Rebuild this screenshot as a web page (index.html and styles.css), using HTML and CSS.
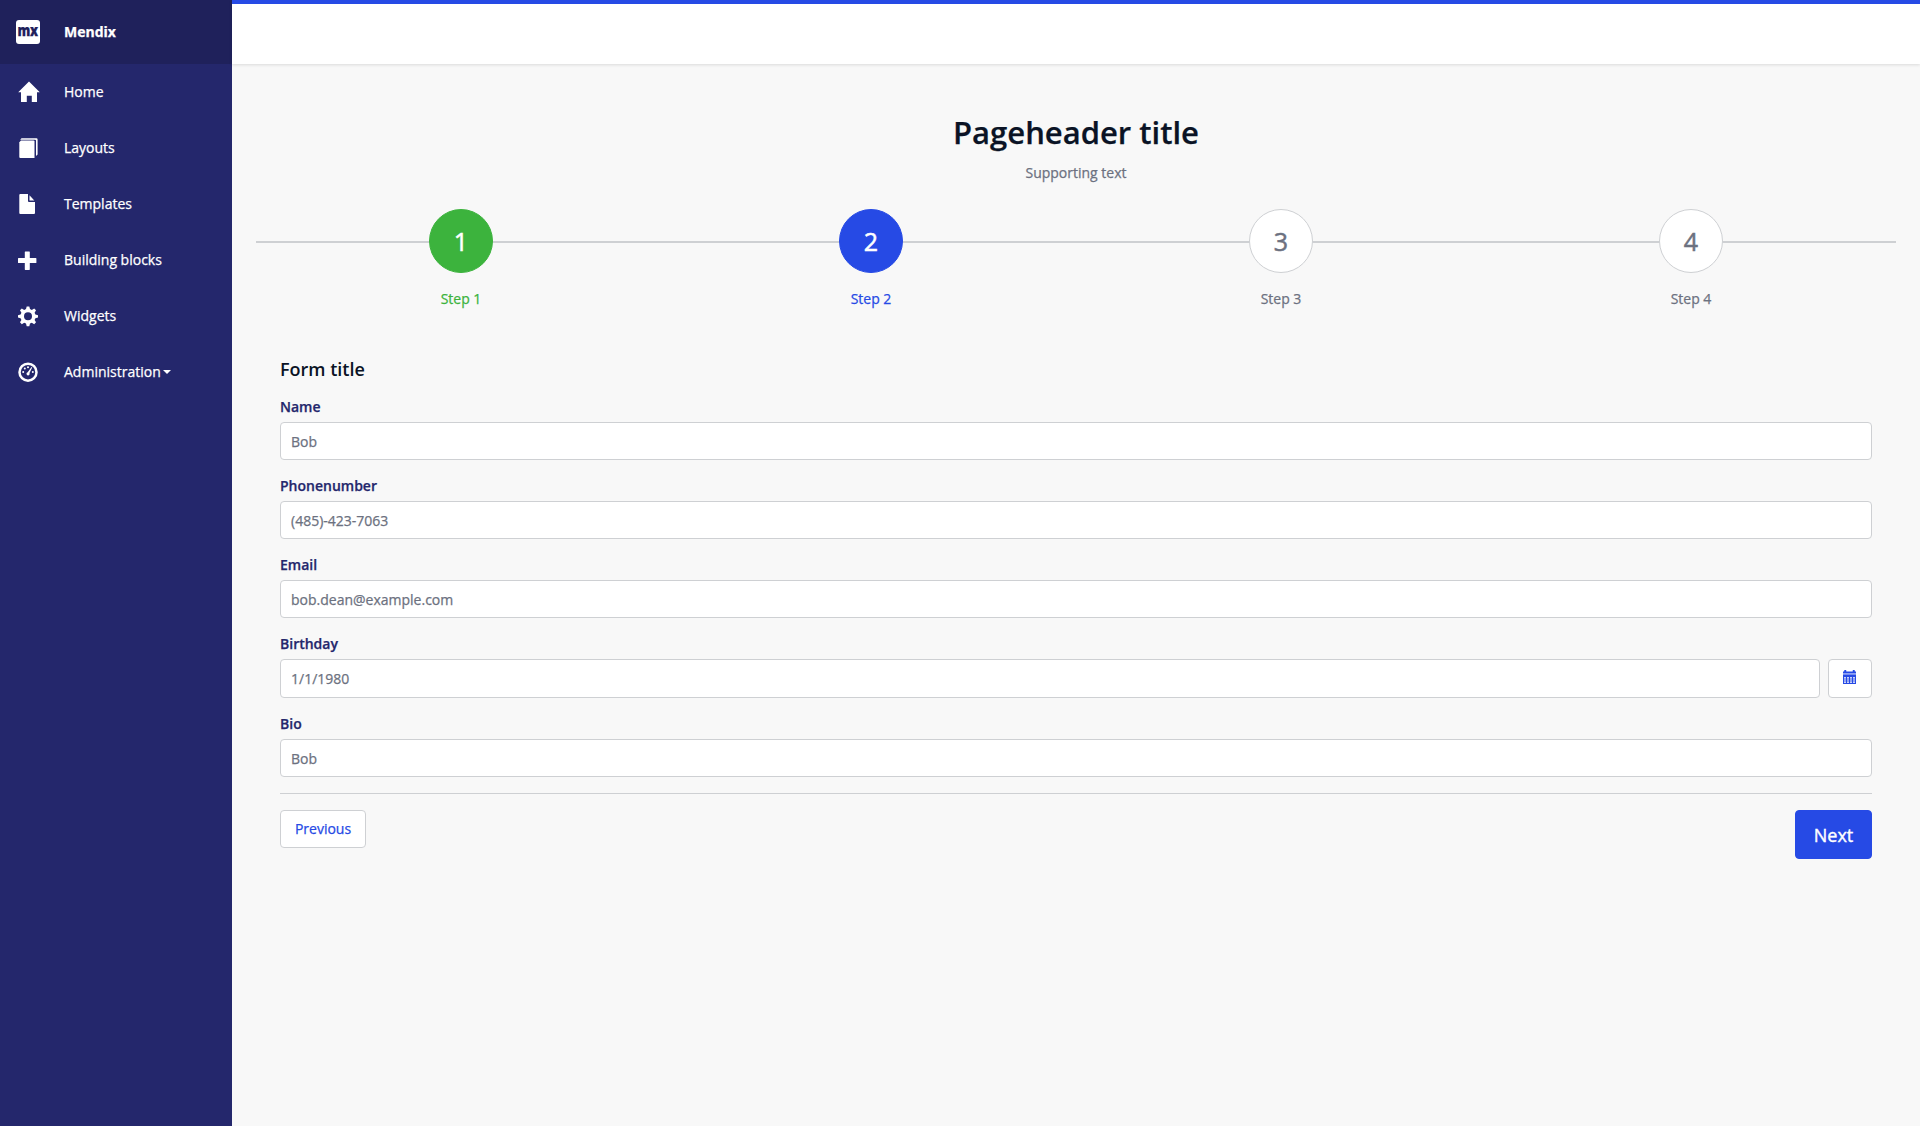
FILE: index.html
```html
<!DOCTYPE html>
<html lang="en">
<head>
<meta charset="utf-8">
<title>Mendix</title>
<link rel="stylesheet" href="styles.css">
</head>
<body>
<div class="layout">
  <aside class="sidebar">
    <div class="brand"><span class="logo"><b>mx</b></span><span>Mendix</span></div>
    <nav class="nav">
      <a class="nav-item"><svg class="icon" viewBox="0 0 24 24"><path d="M13 1.500 23.800 12.200H21V22h-5.200v-6.200h-5V22H5V12.200H2.200z"/></svg><span>Home</span></a>
      <a class="nav-item"><svg class="icon" viewBox="0 0 24 24"><path d="M5 4.500h12.500q1 0 1 1V22H4.300q-1 0-1-1V6.200z"/><path d="M5.500 2.200h14.900q1.200 0 1.200 1.200V18.500L20 20V4.600q0-.9-.9-.9H4.200z"/></svg><span>Layouts</span></a>
      <a class="nav-item"><svg class="icon" viewBox="0 0 24 24"><path d="M4.300 2H12v7q0 1 1 1h6v11q0 1-1 1H4.300q-1 0-1-1V3q0-1 1-1z"/><path d="M13.500 3.300 18.300 8.500H13.500z"/></svg><span>Templates</span></a>
      <a class="nav-item"><svg class="icon" viewBox="0 0 24 24"><path d="M9.300 3.500h4q.5 0 .5.500v6h6q.6 0 .6.600v3.800q0 .6-.6.600h-6v6.300q0 .6-.5.600h-4q-.5 0-.5-.6V15H2.600q-.6 0-.6-.6v-3.800q0-.6.6-.6h6.200V4q0-.5.500-.5z"/></svg><span>Building blocks</span></a>
      <a class="nav-item"><svg class="icon" viewBox="0 0 24 24"><path fill-rule="evenodd" d="M10.700 2.500h2.600l.7 2.600 1.800.8 2.400-1.400 1.800 1.800L18.600 8.700l.8 1.800 2.600.7v2.200l-2.600.8-.8 1.800 1.400 2.300-1.800 1.900-2.400-1.400-1.800.8-.7 2.600h-2.600l-.7-2.600-1.800-.8-2.400 1.400L4 18.300 5.400 16l-.8-1.800L2 13.400v-2.200l2.600-.7.800-1.800L4 6.300l1.800-1.800 2.400 1.400 1.800-.8zM12 8.300a4 4 0 1 0 0 8 4 4 0 0 0 0-8z"/></svg><span>Widgets</span></a>
      <a class="nav-item"><svg class="icon" viewBox="0 0 24 24"><circle class="ring" cx="12" cy="12.200" r="8.500"/><circle cx="7.200" cy="12" r="1"/><circle cx="8.800" cy="8.600" r="1"/><circle cx="12" cy="7.200" r="1"/><circle cx="16.800" cy="12" r="1"/><path d="m15.500 7 .7.500-2.700 5.500a1.600 1.600 0 1 1-1.800-.8z"/></svg><span>Administration</span><i class="caret"></i></a>
    </nav>
  </aside>
  <div class="page">
    <header class="topbar"></header>
    <main class="content">
      <div class="page-header">
        <h1>Pageheader title</h1>
        <p>Supporting text</p>
      </div>
      <ol class="wizard">
        <li class="step done"><span class="number">1</span><span>Step 1</span></li>
        <li class="step active"><span class="number">2</span><span>Step 2</span></li>
        <li class="step"><span class="number">3</span><span>Step 3</span></li>
        <li class="step"><span class="number">4</span><span>Step 4</span></li>
      </ol>
      <form class="form">
        <h2>Form title</h2>
        <label class="field"><span class="label">Name</span><input type="text" value="Bob"></label>
        <label class="field"><span class="label">Phonenumber</span><input type="text" value="(485)-423-7063"></label>
        <label class="field"><span class="label">Email</span><input type="text" value="bob.dean@example.com"></label>
        <div class="field date"><label class="label" for="birthday">Birthday</label>
          <div class="date-row"><input id="birthday" type="text" value="1/1/1980"><button type="button" class="btn calendar" aria-label="Open calendar"><svg viewBox="0 0 13 14"><path d="M0 1.500h1.200V.5q0-.5.500-.5h1.100q.5 0 .5.500v1h6.400v-1q0-.5.500-.5h1.100q.5 0 .5.500v1H13v1.800H0z"/><path class="band" d="M0 3.300h13v1.200H0z"/><path fill-rule="evenodd" d="M0 4.500h13V14H0zM1 7.200v1.300h2V7.200zm3 0v1.300h2V7.200zm3 0v1.300h2V7.200zm3 0v1.300h2V7.200zM1 9.400v1.200h2V9.400zm3 0v1.200h2V9.400zm3 0v1.200h2V9.400zm3 0v1.200h2V9.400zM1 11.600v1.200h2v-1.200zm3 0v1.200h2v-1.200zm3 0v1.200h2v-1.200zm3 0v1.200h2v-1.200z"/></svg></button></div>
        </div>
        <label class="field"><span class="label">Bio</span><input type="text" value="Bob"></label>
        <div class="actions"><button type="button" class="btn previous">Previous</button><button type="button" class="btn next">Next</button></div>
      </form>
    </main>
  </div>
</div>
</body>
</html>
```
FILE: styles.css
```css
* { box-sizing: border-box; }
body { margin: 0; font: 14px/20px "Open Sans", sans-serif; color: #6c7180; background: #f8f8f8; -webkit-text-stroke: .25px; }
.layout { display: flex; min-height: 100vh; }
.sidebar { width: 232px; flex: none; background: #24276c; color: #fff; }
.brand { height: 64px; display: flex; align-items: center; gap: 24px; padding-left: 16px; background: #1f215b; font-weight: 700; }
.logo { width: 24px; height: 24px; display: flex; justify-content: center; border-radius: 3px; background: #fff; color: #1f215b; font: 700 16px/20px "Open Sans", sans-serif; letter-spacing: -.5px; }
.logo b { transform: scaleX(.8); }
.nav { display: flex; flex-direction: column; }
.nav-item { height: 56px; display: flex; align-items: center; padding-left: 16px; }
.icon { width: 24px; height: 24px; margin-right: 24px; fill: #fff; }
.ring { fill: none; stroke: #fff; stroke-width: 2.500px; }
.caret { margin-left: 2px; border: 4px solid transparent; border-top-color: #fff; border-bottom: 0; }
.page { flex: 1; min-width: 0; }
.topbar { height: 64px; background: #fff; border-top: 4px solid #264ae5; box-shadow: 0 1px 3px rgba(0, 0, 0, .12); }
.content { padding: 44px 24px 0; }
.page-header { text-align: center; height: 101px; }
h1 { margin: 0; font-size: 31px; line-height: 48px; font-weight: 600; color: #0a1325; }
.page-header p { margin: 7px 0 0; }
.wizard { list-style: none; margin: 0; padding: 0; display: grid; grid-template-columns: repeat(4, 1fr); height: 135px; background: linear-gradient(#ced0d3, #ced0d3) 0 32px / 100% 2px no-repeat; }
.step { display: flex; flex-direction: column; align-items: center; gap: 16px; }
.number { width: 64px; height: 64px; border: 1px solid #ced0d3; border-radius: 50%; background: #fff; font-size: 25px; line-height: 62px; text-align: center; -webkit-text-stroke-width: .5px; }
.done { color: #3cb33d; }
.active { color: #264ae5; }
.done .number { color: #fff; background: #3cb33d; border-color: #3cb33d; }
.active .number { color: #fff; background: #264ae5; border-color: #264ae5; }
.form { padding: 12px 24px 0; }
h2 { margin: 0 0 14px; font-size: 18px; line-height: 26px; font-weight: 600; color: #0a1325; -webkit-text-stroke-width: 0; }
.field { display: block; height: 79px; }
.field.date { height: 80px; }
.label { display: block; height: 26px; padding-top: 1px; font-weight: 600; color: #24276c; }
input { display: block; width: 100%; height: 38px; padding: 0 10px; border: 1px solid #ced0d3; border-radius: 4px; background: #fff; color: #6c7180; font: inherit; }
.date-row { display: flex; gap: 8px; }
.date-row input { flex: 1; height: 39px; }
.btn { height: 38px; padding: 0; border: 1px solid #ced0d3; border-radius: 4px; background: #fff; color: #264ae5; font: 14px/20px "Open Sans", sans-serif; }
.calendar { width: 44px; height: 39px; display: flex; padding: 10px 0 0 14px; }
.calendar svg { width: 13px; height: 14px; fill: #264ae5; }
.calendar .band { fill-opacity: .5; }
.actions { display: flex; justify-content: space-between; align-items: flex-start; padding-top: 16px; border-top: 1px solid #ced0d3; margin-top: 1px; }
.previous { width: 86px; }
.next { width: 77px; height: 49px; color: #fff; background: #264ae5; border-color: #264ae5; font-size: 18px; -webkit-text-stroke-width: .4px; }
```
